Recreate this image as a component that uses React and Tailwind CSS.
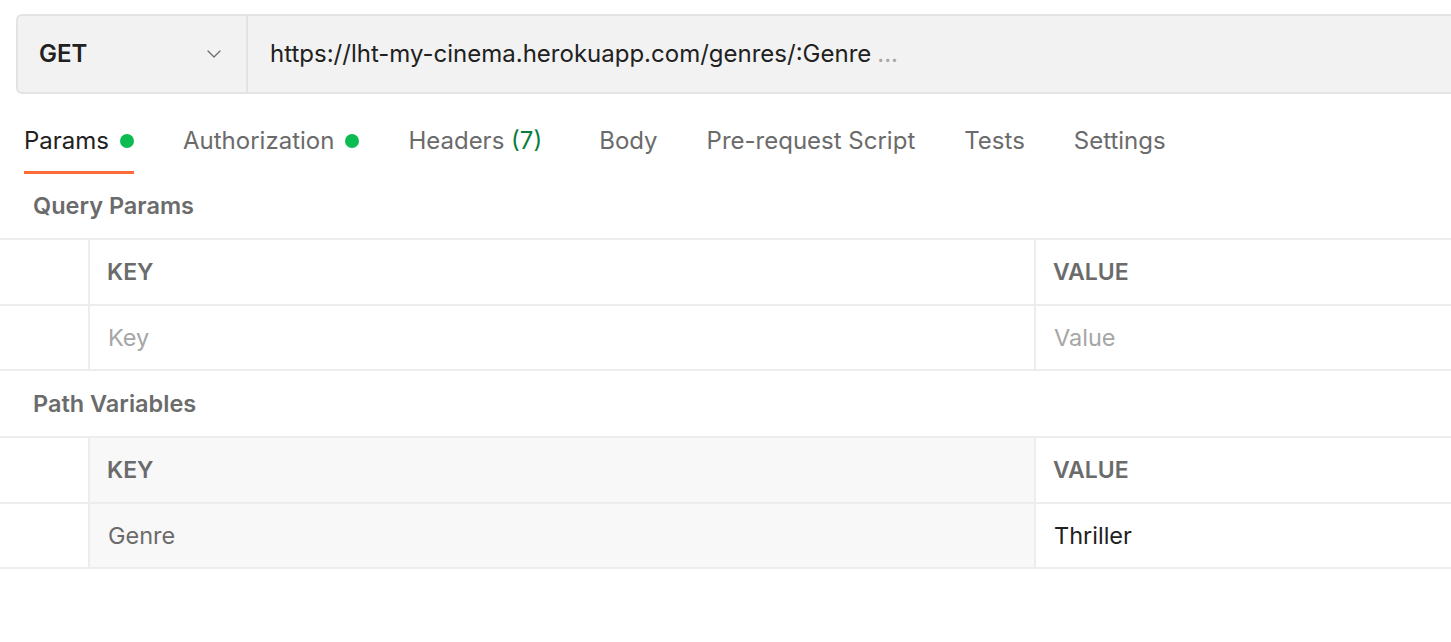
import { ChevronDown } from 'lucide-react';

const tabs = [
    { name: 'Params', dot: true, active: true },
    { name: 'Authorization', dot: true },
    { name: 'Headers', count: '(7)' },
    { name: 'Body' },
    { name: 'Pre-request Script' },
    { name: 'Tests' },
    { name: 'Settings' },
];

function ParamTable({ rows, shaded }) {
    return (
        <div className="border-t-2 border-[#ededed]">
            <div className="flex h-[66px] border-b-2 border-[#ededed]">
                <div className="w-[90px] shrink-0 border-r-2 border-[#ededed]" />
                <div
                    className={`w-[946px] shrink-0 flex items-center pl-[17px] border-r-2 border-[#ededed] ${shaded ? 'bg-[#f8f8f8]' : ''}`}
                >
                    <span className="text-[23px] font-semibold text-[#6b6b6b]">KEY</span>
                </div>
                <div className="flex-1 flex items-center pl-[17px]">
                    <span className="text-[23px] font-semibold text-[#6b6b6b]">VALUE</span>
                </div>
            </div>
            {rows.map((row) => (
                <div key={row.key} className="flex h-[65px] border-b-2 border-[#ededed]">
                    <div className="w-[90px] shrink-0 border-r-2 border-[#ededed]" />
                    <div
                        className={`w-[946px] shrink-0 flex items-center pl-[18px] border-r-2 border-[#ededed] ${shaded ? 'bg-[#f8f8f8]' : ''}`}
                    >
                        <span className={`text-[23.5px] ${row.placeholder ? 'text-[#a6a6a6]' : 'text-[#6b6b6b]'}`}>
                            {row.key}
                        </span>
                    </div>
                    <div className="flex-1 flex items-center pl-[18px]">
                        <span className={`text-[23.5px] ${row.placeholder ? 'text-[#a6a6a6]' : 'text-[#212121]'}`}>
                            {row.value}
                        </span>
                    </div>
                </div>
            ))}
        </div>
    );
}

export default function App() {
    return (
        <div
            className="w-full h-[642px] bg-white overflow-hidden"
            style={{ fontFamily: 'Inter, "Noto Sans", sans-serif' }}
        >
            {/* request bar */}
            <div className="pl-[16px] pt-[14px]">
                <div className="flex h-[80px] border-2 border-r-0 border-[#e3e3e3] rounded-l-[6px] bg-[#f2f2f2]">
                    <div className="w-[230px] shrink-0 flex items-center justify-between pl-[21px] pr-[20px] border-r-2 border-[#e3e3e3]">
                        <span className="text-[24px] font-semibold text-[#212121]">GET</span>
                        <ChevronDown className="w-[24px] h-[24px] text-[#6b6b6b]" strokeWidth={1.25} />
                    </div>
                    <div className="flex items-center pl-[22px] text-[24px] text-[#212121]">
                        https://lht-my-cinema.herokuapp.com/genres/:Genre
                        <span className="ml-[6px] text-[#a6a6a6]">...</span>
                    </div>
                </div>
            </div>

            {/* tabs */}
            <div className="flex gap-[49px] pl-[24px] mt-[16px]">
                {tabs.map((tab) => (
                    <div
                        key={tab.name}
                        className={`h-[64px] flex items-center gap-[11px] border-b-[3px] ${tab.active ? 'border-[#ff6c37] text-[#212121]' : 'border-transparent text-[#6b6b6b]'} ${tab.count ? 'mr-[8px]' : ''}`}
                    >
                        <span className="text-[24px]">
                            {tab.name}
                            {tab.count && <span className="text-[#0a7d3b]"> {tab.count}</span>}
                        </span>
                        {tab.dot && <span className="w-[14px] h-[14px] rounded-full bg-[#0cbb52]" />}
                    </div>
                ))}
            </div>

            <div className="h-[64px] flex items-center pl-[33px]">
                <span className="text-[23.5px] font-semibold text-[#6b6b6b]">Query Params</span>
            </div>
            <ParamTable rows={[{ key: 'Key', value: 'Value', placeholder: true }]} />

            <div className="h-[65px] flex items-center pl-[33px]">
                <span className="text-[23.5px] font-semibold text-[#6b6b6b]">Path Variables</span>
            </div>
            <ParamTable rows={[{ key: 'Genre', value: 'Thriller' }]} shaded />
        </div>
    );
}
